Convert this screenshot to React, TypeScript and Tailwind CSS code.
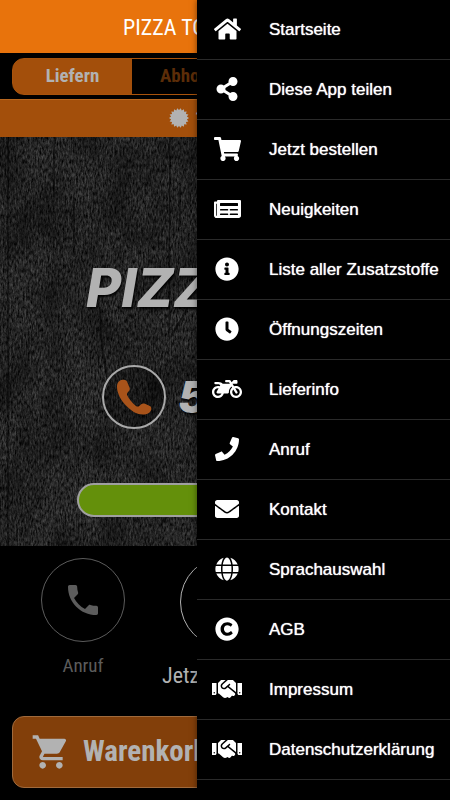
import type { ComponentType } from 'react';
import {
  FaClock,
  FaCopyright,
  FaEnvelope,
  FaGlobe,
  FaHandshake,
  FaHome,
  FaInfoCircle,
  FaMotorcycle,
  FaNewspaper,
  FaPhone,
  FaShareAlt,
  FaShoppingCart,
} from 'react-icons/fa';
import { MdPhone, MdShoppingCart } from 'react-icons/md';

interface MenuItem {
  label: string;
  icon: ComponentType<{ className?: string }>;
  size: string;
}

// Icons share one height, the wide drawings need a wider box
const regular = 'w-6 h-6';
const wide = 'w-[27px] h-6';
const widest = 'w-[30px] h-6';

const menuItems: MenuItem[] = [
  { label: 'Startseite', icon: FaHome, size: wide },
  { label: 'Diese App teilen', icon: FaShareAlt, size: regular },
  { label: 'Jetzt bestellen', icon: FaShoppingCart, size: wide },
  { label: 'Neuigkeiten', icon: FaNewspaper, size: wide },
  { label: 'Liste aller Zusatzstoffe', icon: FaInfoCircle, size: regular },
  { label: 'Öffnungszeiten', icon: FaClock, size: regular },
  { label: 'Lieferinfo', icon: FaMotorcycle, size: widest },
  { label: 'Anruf', icon: FaPhone, size: regular },
  { label: 'Kontakt', icon: FaEnvelope, size: regular },
  { label: 'Sprachauswahl', icon: FaGlobe, size: regular },
  { label: 'AGB', icon: FaCopyright, size: regular },
  { label: 'Impressum', icon: FaHandshake, size: widest },
  { label: 'Datenschutzerklärung', icon: FaHandshake, size: widest },
];

// Scalloped seal, alternating outer and inner radius
const sealPoints = Array.from({ length: 36 }, (_, i) => {
  const r = i % 2 === 0 ? 10 : 8;
  const a = (i * Math.PI) / 18;
  return `${(10 + r * Math.cos(a)).toFixed(2)},${(10 + r * Math.sin(a)).toFixed(2)}`;
}).join(' ');

function WoodTexture() {
  return (
    <svg className="absolute inset-0 w-full h-full" aria-hidden="true">
      <defs>
        <filter id="grain" x="0" y="0" width="100%" height="100%" colorInterpolationFilters="sRGB">
          <feTurbulence type="fractalNoise" baseFrequency="0.6 0.22" numOctaves="4" seed="4" />
          <feColorMatrix values="0.4 0 0 0 -0.05  0.4 0 0 0 -0.05  0.4 0 0 0 -0.05  0 0 0 0 1" />
        </filter>
        <filter id="blotch" x="0" y="0" width="100%" height="100%" colorInterpolationFilters="sRGB">
          <feTurbulence type="fractalNoise" baseFrequency="0.03 0.018" numOctaves="5" seed="11" />
          <feColorMatrix values="0 0 0 0 0  0 0 0 0 0  0 0 0 0 0  2 0 0 0 -0.75" />
        </filter>
      </defs>
      <rect width="100%" height="100%" filter="url(#grain)" />
      <rect width="100%" height="100%" filter="url(#blotch)" opacity="0.45" />
      <path d="M8 0v409M54 0v60M74 60v60M170 0l-1 200M180 50v40" stroke="#000" strokeWidth="1.5" opacity="0.5" fill="none" />
      <path d="M100 170l2 40 5 30M188 170l-17 30" stroke="#000" strokeWidth="2" opacity="0.5" fill="none" />
    </svg>
  );
}

function Handset() {
  return (
    <svg viewBox="0 0 36 36" className="w-9 h-9" fill="#a8531a" aria-hidden="true">
      <path d="M6.500 .8C3 1.500 1 4 1 8c0 6 4 14 10 19.500C16 32.500 21 35.500 27 35.500c4.500 0 7.500-2 8.300-5 .4-1.800-.3-3-2-3.700L29 24.800c-1.500-.7-2.700-.4-3.800.5l-2 1.600c-1 .8-2 .8-3.200 0C16.500 24.200 13 20 11.300 16.500c-.6-1.300-.4-2.200.5-3.200l1.200-1.300c.9-1 1-2.200.5-3.500L11 2.500C10.200 1 8.500.300 6.500.8z" />
    </svg>
  );
}

function SideMenu() {
  return (
    <nav className="absolute inset-y-0 right-0 w-[253px] bg-black shadow-[0_0_6px_rgba(0,0,0,0.5)] font-['Liberation_Sans',sans-serif]">
      <ul>
        {menuItems.map(({ label, icon: Icon, size }) => (
          <li key={label} className="border-b border-[#2a2a2a]">
            <a href="#" className="flex items-center h-[59px] text-white">
              <span className="flex justify-center w-[60px] pb-0.5">
                <Icon className={size} />
              </span>
              <span className="pl-3 text-[17px] whitespace-nowrap [text-shadow:0_0_1px_#fff]">{label}</span>
            </a>
          </li>
        ))}
      </ul>
    </nav>
  );
}

export default function App() {
  return (
    <div className="relative min-h-screen overflow-hidden bg-black font-['Roboto_Condensed','Liberation_Sans_Narrow',sans-serif]">
      <header className="flex items-center h-[53px] pt-px pl-[123px] bg-[#e8730c]">
        <h1 className="text-[22px] text-white whitespace-nowrap">PIZZA TO</h1>
      </header>

      {/* Delivery or pickup */}
      <div className="px-3 pt-[5px] pb-1">
        <div className="flex h-[37px] pb-px rounded-xl overflow-hidden border border-[#a8530c] bg-[linear-gradient(90deg,#a34f0b_119px,#000_119px)] text-[19px] font-bold">
          <button className="w-[119px] text-[#b2b2b2]">Liefern</button>
          <button className="pl-7 text-[#5c2d08]">Abholen</button>
        </div>
      </div>

      <div className="flex items-center gap-[6px] h-[38px] pb-0.5 pl-[169px] bg-[#a34f0b] border-t border-[#b8671f] text-[#b2b2b2]">
        <svg viewBox="0 0 20 20" className="w-5 h-5" fill="currentColor" aria-hidden="true">
          <polygon points={sealPoints} />
        </svg>
        <span className="font-bold">1</span>
      </div>

      <section className="relative overflow-hidden">
        <WoodTexture />
        <div className="relative pt-[122px] pb-[29px] text-[#b2b2b2]">
          <p className="pl-[86px] h-[106px] text-[54px] leading-[58px] font-extrabold italic font-['Inter',sans-serif] [text-shadow:1px_2px_3px_#000]">
            PIZZ
          </p>
          <div className="flex items-center gap-3 pl-[102px]">
            <span className="flex items-center justify-center w-16 h-16 rounded-full border-2 border-[#a9a9a9] bg-black/30">
              <Handset />
            </span>
            <span className="text-[44px] leading-[48px] font-black italic font-['Inter',sans-serif] [text-shadow:1px_2px_3px_#000]">
              5
            </span>
          </div>
          <button
            aria-label="Jetzt bestellen"
            className="block w-[296px] h-[34px] mx-auto mt-[54px] rounded-full bg-[#64900b] border-2 border-[#a0a0a0]"
          />
        </div>
      </section>

      {/* Quick actions */}
      <section className="grid grid-cols-3 px-3 pt-[10px]">
        <a href="#" className="flex flex-col items-center gap-2 pt-[2px] text-[#5c5c5c]">
          <span className="flex items-center justify-center w-[84px] h-[84px] rounded-full border border-[#5c5c5c]">
            <MdPhone className="w-10 h-10" />
          </span>
          <span className="text-[19px] leading-8">Anruf</span>
        </a>
        <a href="#" className="flex flex-col gap-3 pl-2 text-[#b2b2b2]">
          <span className="w-[92px] h-[92px] ml-[18px] rounded-full border border-[#b2b2b2]" />
          <span className="text-[22px] leading-8">Jetzt</span>
        </a>
      </section>

      <div className="px-3 pt-6 pb-3">
        <button className="flex items-center gap-3 w-full h-[72px] pl-[18px] rounded-xl bg-[#823f0a] border border-[#a06a3c] text-[#b2b2b2] text-[29px] font-bold">
          <MdShoppingCart className="w-10 h-10" />
          <span>Warenkorb</span>
        </button>
      </div>

      <SideMenu />
    </div>
  );
}
